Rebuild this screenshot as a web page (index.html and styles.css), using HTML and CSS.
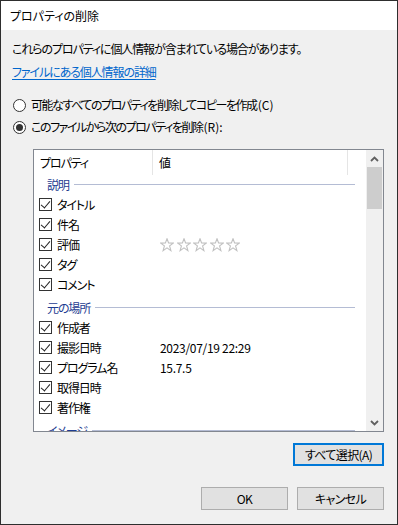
FILE: index.html
```html
<!DOCTYPE html>
<html lang="ja">
<head>
<meta charset="utf-8">
<title>プロパティの削除</title>
<link rel="stylesheet" href="styles.css">
</head>
<body>
<div class="window">
  <div class="titlebar">プロパティの削除</div>
  <div class="content">
    <div class="intro">これらのプロパティに個人情報が含まれている場合があります。</div>
    <div class="link-line"><a class="link" href="#">ファイルにある個人情報の詳細</a></div>
    <div class="radio-row first-radio"><span class="radio"></span><span>可能なすべてのプロパティを削除してコピーを作成<span class="key">(C)</span></span></div>
    <div class="radio-row"><span class="radio checked"></span><span>このファイルから次のプロパティを削除<span class="key">(R):</span></span></div>

    <div class="listbox">
      <div class="list-main">
        <div class="list-header">
          <div class="col col-name">プロパティ</div>
          <div class="col col-value">値</div>
          <div class="col col-rest"></div>
        </div>
        <div class="list-body">
          <div class="group first-group"><span class="group-label">説明</span><span class="group-line"></span></div>
          <div class="item"><span class="check"></span><span class="item-name">タイトル</span><span class="item-value"></span></div>
          <div class="item"><span class="check"></span><span class="item-name">件名</span><span class="item-value"></span></div>
          <div class="item"><span class="check"></span><span class="item-name">評価</span><span class="item-value stars">
            <svg class="star" viewBox="0 0 14 14"><polygon points="7,0.8 8.6,5 13.2,5.1 9.6,7.9 10.9,12.6 7,9.9 3.1,12.6 4.4,7.9 0.8,5.1 5.4,5" /></svg>
            <svg class="star" viewBox="0 0 14 14"><polygon points="7,0.8 8.6,5 13.2,5.1 9.6,7.9 10.9,12.6 7,9.9 3.1,12.6 4.4,7.9 0.8,5.1 5.4,5" /></svg>
            <svg class="star" viewBox="0 0 14 14"><polygon points="7,0.8 8.6,5 13.2,5.1 9.6,7.9 10.9,12.6 7,9.9 3.1,12.6 4.4,7.9 0.8,5.1 5.4,5" /></svg>
            <svg class="star" viewBox="0 0 14 14"><polygon points="7,0.8 8.6,5 13.2,5.1 9.6,7.9 10.9,12.6 7,9.9 3.1,12.6 4.4,7.9 0.8,5.1 5.4,5" /></svg>
            <svg class="star" viewBox="0 0 14 14"><polygon points="7,0.8 8.6,5 13.2,5.1 9.6,7.9 10.9,12.6 7,9.9 3.1,12.6 4.4,7.9 0.8,5.1 5.4,5" /></svg>
          </span></div>
          <div class="item"><span class="check"></span><span class="item-name">タグ</span><span class="item-value"></span></div>
          <div class="item"><span class="check"></span><span class="item-name">コメント</span><span class="item-value"></span></div>
          <div class="group"><span class="group-label">元の場所</span><span class="group-line"></span></div>
          <div class="item"><span class="check"></span><span class="item-name">作成者</span><span class="item-value"></span></div>
          <div class="item"><span class="check"></span><span class="item-name">撮影日時</span><span class="item-value">2023/07/19 22:29</span></div>
          <div class="item"><span class="check"></span><span class="item-name">プログラム名</span><span class="item-value">15.7.5</span></div>
          <div class="item"><span class="check"></span><span class="item-name">取得日時</span><span class="item-value"></span></div>
          <div class="item"><span class="check"></span><span class="item-name">著作権</span><span class="item-value"></span></div>
          <div class="group"><span class="group-label">イメージ</span><span class="group-line"></span></div>
        </div>
      </div>
      <div class="scrollbar">
        <div class="sb-arrow">
          <svg viewBox="0 0 9 6" class="caret"><polyline points="1,5 4.5,1.5 8,5" /></svg>
        </div>
        <div class="sb-thumb"></div>
        <div class="sb-track"></div>
        <div class="sb-arrow">
          <svg viewBox="0 0 9 6" class="caret"><polyline points="1,1 4.5,4.5 8,1" /></svg>
        </div>
      </div>
    </div>

    <div class="select-row">
      <button class="btn btn-default btn-select">すべて選択(A)</button>
    </div>
    <div class="footer">
      <button class="btn">OK</button>
      <button class="btn">キャンセル</button>
    </div>
  </div>
</div>
</body>
</html>
```

FILE: styles.css
```css
* { box-sizing: border-box; }
html, body {
  margin: 0;
  padding: 0;
  background: #f0f0f0;
}
body {
  font-family: "Noto Sans CJK JP", "Noto Sans", sans-serif;
  font-size: 12px;
  font-feature-settings: "palt";
  color: #000;
}
.window {
  width: 398px;
  height: 525px;
  border: 1px solid #2e2e2e;
  background: #f0f0f0;
  display: flex;
  flex-direction: column;
  overflow: hidden;
}
.titlebar {
  height: 29px;
  background: #fff;
  padding-left: 9px;
  line-height: 29px;
  flex: none;
}
.content {
  flex: 1;
  padding: 9px 13px 0 11px;
  display: flex;
  flex-direction: column;
  letter-spacing: -1.1px;
}
.intro {
  height: 20px;
  line-height: 20px;
}
.link-line {
  height: 20px;
  line-height: 20px;
  margin-top: 3px;
}
.link {
  color: #0066cc;
  text-decoration: underline;
  text-underline-offset: 2px;
}
.radio-row {
  height: 20px;
  line-height: 20px;
  display: flex;
  align-items: center;
  gap: 5px;
  margin-top: 2px;
  letter-spacing: -1.45px;
}
.key {
  letter-spacing: 0;
  margin-left: 1px;
}
.first-radio { margin-top: 13px; }
.radio {
  width: 13px;
  height: 13px;
  border: 1px solid #333;
  border-radius: 50%;
  background: #fff;
  position: relative;
  flex: none;
  margin-left: 1px;
}
.radio.checked::after {
  content: "";
  position: absolute;
  left: 2px;
  top: 2px;
  width: 7px;
  height: 7px;
  border-radius: 50%;
  background: #333;
}
.listbox {
  margin-top: 12px;
  margin-left: 21px;
  height: 283px;
  border: 1px solid #828790;
  background: #fff;
  display: flex;
  flex: none;
}
.list-main {
  flex: 1;
  overflow: hidden;
  display: flex;
  flex-direction: column;
}
.list-header {
  height: 25px;
  display: flex;
  flex: none;
}
.col {
  height: 25px;
  line-height: 25px;
  padding-left: 6px;
}
.col-name {
  width: 119px;
  border-right: 1px solid #e5e5e5;
}
.col-value {
  width: 195px;
  border-right: 1px solid #e5e5e5;
}
.col-rest { flex: 1; }
.list-body {
  flex: 1;
  overflow: hidden;
}
.group {
  height: 20px;
  display: flex;
  align-items: center;
  padding-left: 13px;
  margin-top: 3px;
}
.first-group { margin-top: -1px; }
.group-label {
  color: #1e3c91;
  flex: none;
}
.group-line {
  flex: 1;
  height: 1px;
  background: #b4bcd4;
  margin-left: 5px;
  margin-right: 11px;
}
.item {
  height: 20px;
  display: flex;
  align-items: center;
  padding-left: 5px;
}
.check {
  width: 13px;
  height: 13px;
  border: 1px solid #333;
  background: #fff;
  flex: none;
  position: relative;
}
.check::after {
  content: "";
  position: absolute;
  left: 3px;
  top: 0px;
  width: 4px;
  height: 8px;
  border-right: 1.2px solid #222;
  border-bottom: 1.2px solid #222;
  transform: rotate(40deg);
}
.item-name {
  width: 103px;
  margin-left: 5px;
  flex: none;
}
.item-value {
  display: flex;
  align-items: center;
  letter-spacing: -0.3px;
}
.stars { gap: 2.5px; margin-top: 2px; }
.star {
  width: 14px;
  height: 14px;
  fill: none;
  stroke: #c0c0c0;
  stroke-width: 1.1;
}
.scrollbar {
  width: 17px;
  flex: none;
  background: #f0f0f0;
  display: flex;
  flex-direction: column;
  align-items: stretch;
}
.sb-arrow {
  height: 17px;
  display: flex;
  align-items: center;
  justify-content: center;
  flex: none;
}
.caret {
  width: 9px;
  height: 6px;
  fill: none;
  stroke: #606060;
  stroke-width: 1.8;
}
.sb-thumb {
  height: 42px;
  margin: 0 1px;
  background: #cdcdcd;
  flex: none;
}
.sb-track { flex: 1; }
.select-row {
  display: flex;
  justify-content: flex-end;
  margin-top: 11px;
}
.btn {
  font-family: inherit;
  font-size: 12px;
  font-feature-settings: "palt";
  letter-spacing: -0.6px;
  color: #000;
  background: #e1e1e1;
  border: 1px solid #adadad;
  height: 23px;
  padding: 0;
  margin: 0;
  line-height: 20px;
}
.btn-default {
  border: 2px solid #0078d7;
}
.btn-select { width: 91px; }
.footer {
  display: flex;
  justify-content: flex-end;
  gap: 9px;
  margin-top: 21px;
}
.footer .btn { width: 87px; }
```
